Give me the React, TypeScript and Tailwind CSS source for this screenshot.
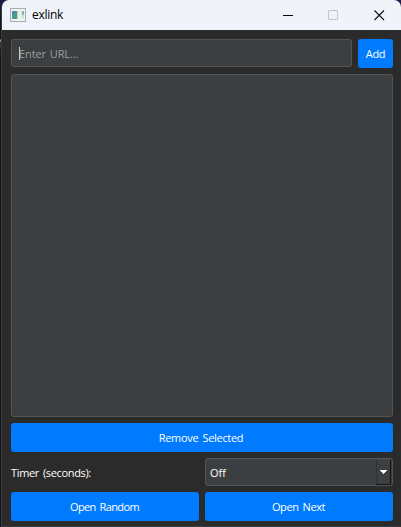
import type { ReactNode } from 'react';

function Button({ children, className = '', label = '' }: { children: ReactNode; className?: string; label?: string }) {
  return (
    <button
      className={`flex h-[29px] items-center justify-center rounded-[3px] bg-[#007bff] text-white ${className}`}
    >
      <span className={`whitespace-nowrap ${label}`}>{children}</span>
    </button>
  );
}

function AppIcon() {
  return (
    <svg width="16" height="14" viewBox="0 0 16 14" shapeRendering="crispEdges">
      <defs>
        <linearGradient id="pane" x1="0" y1="0" x2="0.6" y2="1">
          <stop offset="0" stopColor="#4b83a9" />
          <stop offset="1" stopColor="#47a677" />
        </linearGradient>
      </defs>
      <rect width="16" height="14" fill="#a9adb3" />
      <rect x="1" y="1" width="14" height="12" fill="#eff1f3" />
      <rect x="2" y="3" width="5" height="8" fill="url(#pane)" />
      <rect x="7" y="3" width="1" height="8" fill="#b7d6c9" />
      <rect x="8" y="3" width="4" height="8" fill="#e8ece8" />
      <rect x="12" y="3" width="2" height="4" fill="#83b5b4" />
      <rect x="12" y="7" width="2" height="4" fill="#d4e3da" />
    </svg>
  );
}

function TitleBar() {
  return (
    <header className="flex h-[30px] shrink-0 items-center rounded-t-[7px] bg-[#f0f3f9] pl-2 text-black">
      <AppIcon />
      <span className="ml-[6px] font-['Open_Sans','Noto_Sans',sans-serif] text-[12px] leading-4 tracking-[-0.3px]">exlink</span>
      <div className="ml-auto flex items-center pr-[16px]">
        <svg width="102" height="12" viewBox="0 0 102 12" fill="none">
          <path d="M0 6.5h10" stroke="#000" />
          <rect x="45.5" y="1.5" width="9" height="9" rx="0.5" stroke="#c2c4c9" />
          <path d="M91.5 1.5l9.5 9.5M101 1.5l-9.5 9.5" stroke="#111" strokeWidth="1.1" />
        </svg>
      </div>
    </header>
  );
}

export default function App() {
  return (
    <div className="h-[527px] w-[401px] overflow-hidden bg-[linear-gradient(#1c1a4a_0px,#1c1a4a_10px,#17171c_11px,#17171c_39px,#7fb58a_40px,#7fb58a_41px,#333_42px,#333_48px,#17171c_49px)] pl-px font-['Open_Sans','Noto_Sans',sans-serif] text-[11px] leading-4 text-white">
      <div className="flex h-full flex-col rounded-t-[8px] border-b border-l border-[#3b3b3b] bg-[#2b2b2b]">
        <TitleBar />
        <main className="flex flex-1 flex-col gap-[6px] pt-[9px] pr-2 pl-[9px]">
          <div className="flex h-[29px] gap-[6px]">
            <div className="flex h-[28px] flex-1 items-center rounded-[3px] border border-[#555] bg-[#3c3f41] pl-[7px] text-[#9d9e9f]">
              <span className="h-[13px] w-px bg-[#d0d0d0]" />
              <span className="-ml-px pt-[2px] tracking-[-0.1px] [word-spacing:1px]">Enter URL...</span>
            </div>
            <Button className="w-[35px]" label="tracking-[-0.3px]">Add</Button>
          </div>
          <div className="h-[343px] rounded-[3px] border border-[#555] bg-[#3c3f41]" />
          <Button label="pr-[2px] tracking-[-0.3px] [word-spacing:1.5px]">Remove Selected</Button>
          <div className="flex h-[28px] items-center">
            <span className="w-[194px] pt-[2px] tracking-[-0.35px] [word-spacing:1.5px]">Timer (seconds):</span>
            <div className="flex h-[28px] flex-1 items-center justify-between rounded-[3px] border border-[#555] bg-[#3c3f41] pl-[4px]">
              <span className="pt-[2px]">Off</span>
              <span className="mr-px flex h-[26px] w-[15px] items-center justify-center border-t border-r border-b border-l border-t-[#45484a] border-r-[#101112] border-b-[#101112] border-l-[#303335] bg-[#3c3f41]">
                <svg width="7" height="4" viewBox="0 0 7 4" shapeRendering="crispEdges" fill="#fff">
                  <path d="M0 0h7v1H6v1H5v1H4v1H3V3H2V2H1V1H0z" />
                </svg>
              </span>
            </div>
          </div>
          <div className="flex gap-[6px]">
            <Button className="flex-1" label="pr-px tracking-[-0.6px] [word-spacing:1.5px]">Open Random</Button>
            <Button className="flex-1" label="pr-px tracking-[-0.4px] [word-spacing:1.5px]">Open Next</Button>
          </div>
        </main>
      </div>
    </div>
  );
}
